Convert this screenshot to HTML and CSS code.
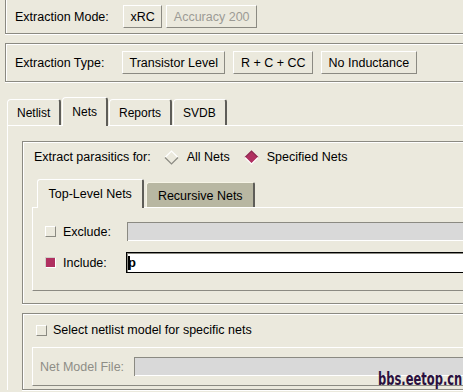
FILE: index.html
```html
<!DOCTYPE html>
<html>
<head>
<meta charset="utf-8">
<link rel="stylesheet" href="styles.css">
</head>
<body>
<div class="panel p1">
  <span class="lbl">Extraction Mode:</span>
  <div class="btns g4"><span class="btn">xRC</span><span class="btn dis">Accuracy 200</span></div>
</div>
<div class="panel p2">
  <span class="lbl">Extraction Type:</span>
  <div class="btns g7"><span class="btn">Transistor Level</span><span class="btn">R + C + CC</span><span class="btn">No Inductance</span></div>
</div>
<div class="tabs main-tabs">
  <span class="tab">Netlist</span>
  <span class="tab sel">Nets</span>
  <span class="tab">Reports</span>
  <span class="tab">SVDB</span>
</div>
<div class="nb">
  <div class="frame fa">
    <div class="radio-row">
      <span class="rlbl">Extract parasitics for:</span>
      <span class="radio r1"><svg class="dia" width="15" height="15" viewBox="0 0 15 15"><polygon points="7.5,1 14,7.5 7.5,14 1,7.5" fill="#ebe9dd"/><polyline points="1,7.5 7.5,1 14,7.5" fill="none" stroke="#ffffff" stroke-width="1.2"/><polyline points="1,7.5 7.5,14 14,7.5" fill="none" stroke="#8b8a82" stroke-width="1.2"/></svg>All Nets</span>
      <span class="radio r2"><svg class="dia" width="15" height="15" viewBox="0 0 15 15"><polygon points="7.5,1 14,7.5 7.5,14 1,7.5" fill="#b03060"/><polyline points="1,7.5 7.5,1 14,7.5" fill="none" stroke="#8c2650" stroke-width="1.2"/><polyline points="1,7.5 7.5,14 14,7.5" fill="none" stroke="#ffffff" stroke-width="1.2"/></svg>Specified Nets</span>
    </div>
    <div class="tabs sub-tabs">
      <span class="stab sel">Top-Level Nets</span>
      <span class="stab off">Recursive Nets</span>
    </div>
    <div class="subnb">
      <div class="erow"><span class="chk"></span><span class="elbl">Exclude:</span><span class="entry dis"></span></div>
      <div class="erow"><span class="chk on"></span><span class="elbl">Include:</span><span class="entry focus"><span class="cur"></span>p</span></div>
    </div>
  </div>
  <div class="frame fb">
    <div class="crow"><span class="chk"></span><span class="ctext">Select netlist model for specific nets</span></div>
    <div class="fc"><span class="dlbl">Net Model File:</span><span class="entry dis"></span></div>
  </div>
</div>
<div class="wm">bbs.eetop.cn</div>
</body>
</html>
```

FILE: styles.css
```css
html, body {
  margin: 0;
  padding: 0;
}
body {
  background: #ebe9dd;
  font-family: "Liberation Sans", Arial, sans-serif;
  font-size: 12.5px;
  color: #000;
  width: 463px;
  height: 392px;
  overflow: hidden;
  position: relative;
}

/* etched panels */
.panel {
  display: flex;
  align-items: center;
  border: 1px solid #8b8a82;
  border-right: 0;
  box-shadow: inset 1px 1px 0 #fff, 0 1px 0 #fff;
  margin-right: -20px;
  margin-left: 5px;
}
.p1 {
  margin-top: -2px;
  padding: 6px 0 5px 9px;
}
.p2 {
  margin-top: 9px;
  padding: 7px 0 7px 9px;
}
.lbl {
  width: 108px;
  flex: none;
}
.p2 .lbl { width: 107px; }
.btns { display: flex; }
.g4 { gap: 4px; }
.g7 { gap: 8px; }
.btn {
  box-sizing: border-box;
  height: 23px;
  padding: 0 6.5px;
  display: flex;
  align-items: center;
  border: 1px solid #fff;
  border-right-color: #8b8a82;
  border-bottom-color: #8b8a82;
}
.btn.dis { color: #9c9b95; }

/* tabs */
.tabs {
  display: flex;
  align-items: flex-end;
}
.main-tabs {
  margin: 15px 0 0 7px;
  gap: 1px;
  font-size: 12px;
}
.tab {
  box-sizing: border-box;
  height: 26px;
  padding: 0 9px 0 9px;
  display: flex;
  align-items: center;
  border-top: 1px solid #fff;
  border-left: 1px solid #fff;
  border-right: 2px solid #5e5d58;
  border-radius: 4px 3px 0 0;
}
.tab.sel {
  height: 29px;
  margin-bottom: -1px;
  position: relative;
  z-index: 1;
  background: #ebe9dd;
}

.nb {
  border-top: 1px solid #fff;
  border-left: 1px solid #fff;
  margin-left: 7px;
  padding: 15px 0 0 14px;
}

.frame {
  border: 1px solid #8b8a82;
  border-right: 0;
  box-shadow: inset 1px 1px 0 #fff, 0 1px 0 #fff;
  margin-right: -20px;
}
.fa {
  padding: 6px 0 12px 9px;
}
.radio-row {
  height: 18px;
  display: flex;
  align-items: center;
  margin-left: 2px;
}
.radio {
  display: flex;
  align-items: center;
  gap: 8px;
}
.r1 { margin-left: 13px; }
.r2 { margin-left: 14px; }
.dia { display: block; flex: none; }

.sub-tabs {
  margin: 13px 0 0 5px;
  gap: 2px;
}
.stab {
  box-sizing: border-box;
  height: 25px;
  padding: 0 10.5px;
  display: flex;
  align-items: center;
  border-top: 1px solid #fff;
  border-left: 1px solid #fff;
  border-right: 2px solid #5e5d58;
  border-radius: 3px 2px 0 0;
}
.stab.sel {
  height: 29px;
  margin-bottom: -1px;
  position: relative;
  z-index: 1;
  background: #ebe9dd;
}
.stab.off {
  background: #b8b7a2;
  border-top-color: #f6f4e6;
  border-left-color: #f6f4e6;
  padding-top: 1px;
  padding-right: 10px;
}

.subnb {
  border-top: 1px solid #fff;
  border-left: 1px solid #fff;
  border-bottom: 1px solid #8b8a82;
  padding: 13px 0 17px 12px;
  display: flex;
  flex-direction: column;
  gap: 10px;
}
.erow {
  display: flex;
  align-items: center;
  height: 21px;
}
.chk {
  box-sizing: border-box;
  width: 11px;
  height: 11px;
  flex: none;
  border: 1px solid #fff;
  border-right-color: #8b8a82;
  border-bottom-color: #8b8a82;
}
.chk.on {
  background: #b03060;
  border-color: #d0d0c8 #fff #fff #d0d0c8;
}
.elbl {
  margin-left: 7px;
  width: 63px;
  flex: none;
}
.entry {
  box-sizing: border-box;
  flex: 1;
  height: 21px;
  border: 1px solid #ebe9dd;
  background: #d9d9d9;
  background-clip: padding-box;
  box-shadow: inset 1px 1px 0 #8b8a82, inset -1px -1px 0 #fff;
  display: flex;
  align-items: center;
}
.entry.focus {
  border-color: #000;
  background: #fff;
  box-shadow: inset 1px 1px 0 #8b8a82;
  padding-left: 1px;
  font-size: 13px;
  font-weight: bold;
}
.cur {
  display: inline-block;
  width: 2px;
  height: 14px;
  background: #000;
  margin-right: -2px;
  margin-top: 1px;
}

.fb {
  margin-top: 9px;
  padding: 6px 0 3px 9px;
}
.crow {
  height: 20px;
  display: flex;
  align-items: center;
  margin-left: 4px;
}
.ctext { margin-left: 6px; }
.fc {
  margin-top: 7px;
  border-top: 1px solid #fff;
  border-left: 1px solid #fff;
  border-bottom: 1px solid #8b8a82;
  padding: 8px 0 8px 7px;
  display: flex;
  align-items: center;
}
.dlbl {
  width: 93px;
  flex: none;
  color: #8e8d86;
}

.wm {
  position: absolute;
  left: 378px;
  top: 368px;
  font-family: "Liberation Sans Narrow", "DejaVu Sans Condensed", sans-serif;
  font-weight: bold;
  font-size: 18px;
  color: #2a1040;
  transform-origin: left top;
  transform: scaleX(0.71);
  white-space: nowrap;
}
```
